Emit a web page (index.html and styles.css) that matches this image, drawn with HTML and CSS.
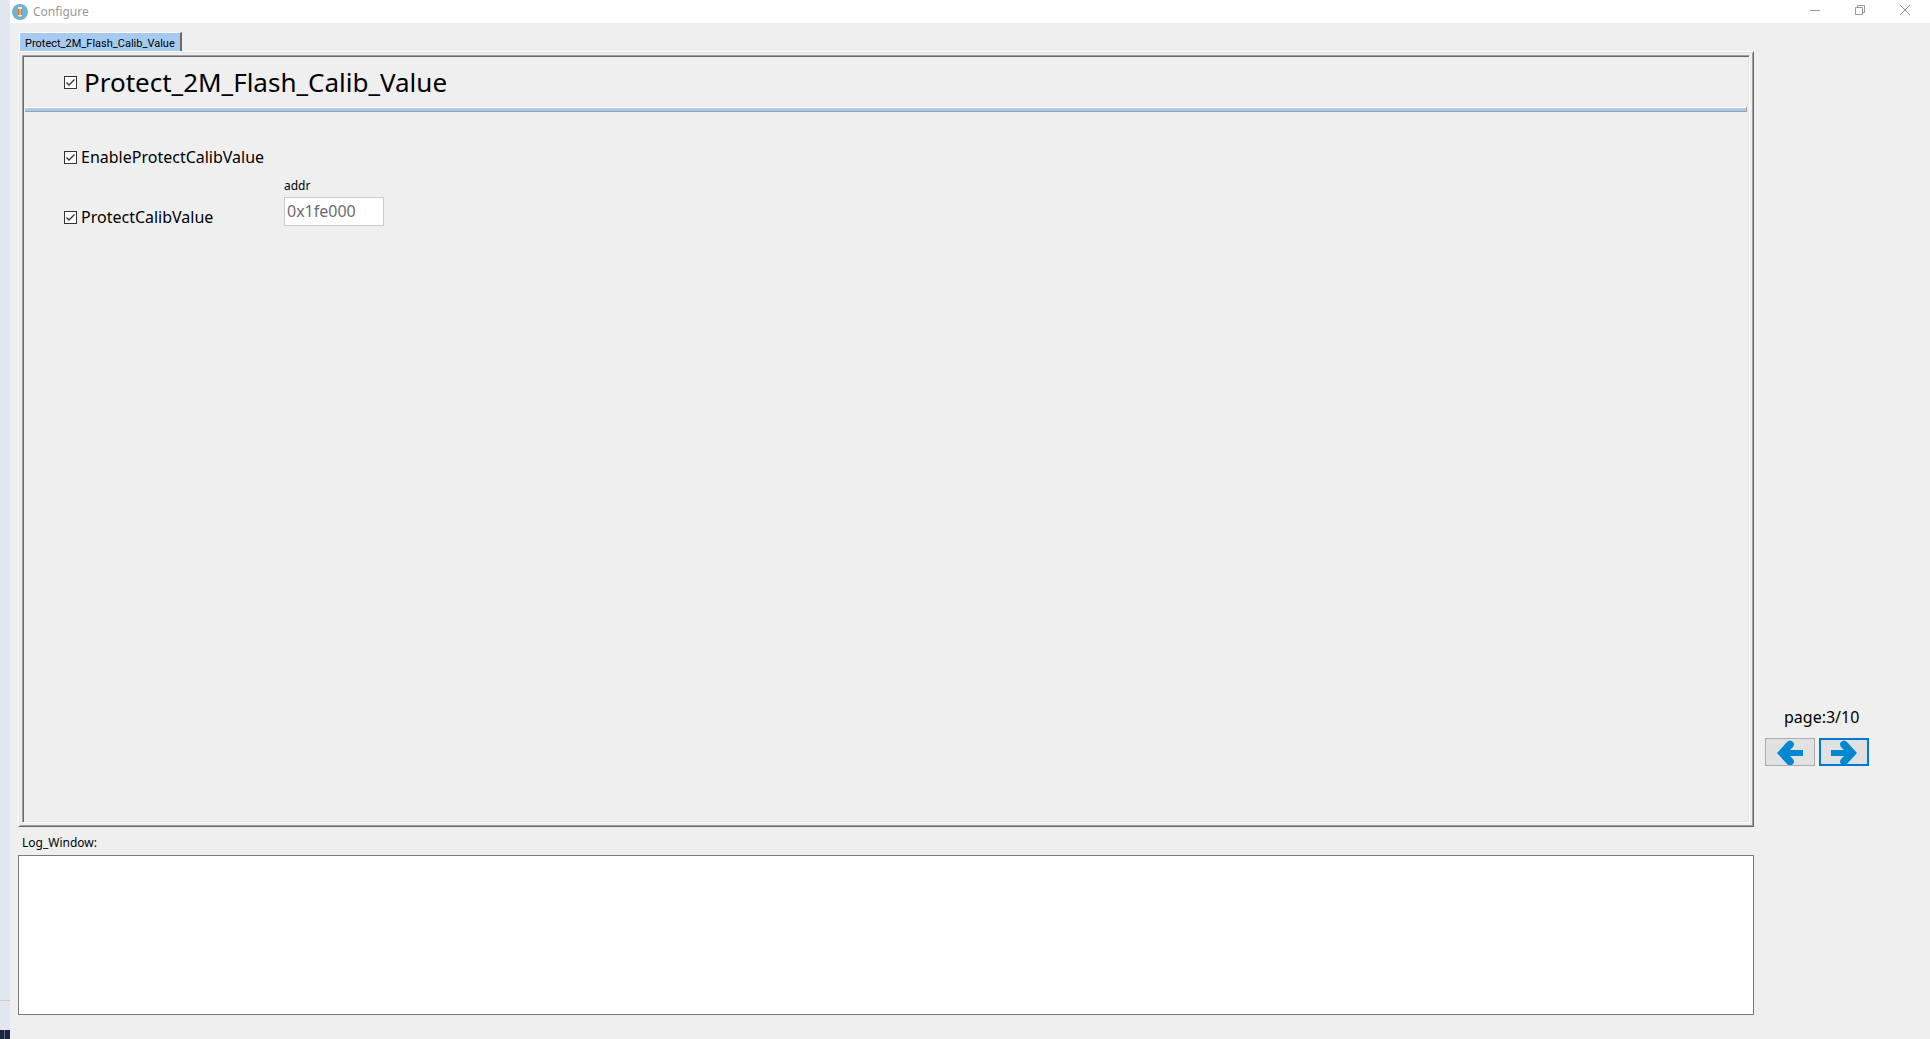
FILE: index.html
```html
<!DOCTYPE html>
<html lang="en">
<head>
<meta charset="utf-8">
<title>Configure</title>
<link rel="stylesheet" href="styles.css">
</head>
<body>
<div class="desktop"><div class="desktop-edge"></div><div class="taskbar"></div></div>
<div class="window">
  <header class="titlebar">
    <svg class="app-icon" viewBox="0 0 16 16" aria-hidden="true">
      <circle cx="8" cy="8" r="8" fill="#71b1d3"/>
      <path d="M6 3h4v8.500l-2 2.500-2-2.500z" fill="#f8e6d2"/>
      <path d="M6 5h4v6H6z" fill="#e2703c"/>
      <path d="M7.300 5H9v6H7.300z" fill="#f6ae6a"/>
      <path d="M7.300 12.800h1.400L8 14z" fill="#5a4a42"/>
    </svg>
    <h1 class="window-title">Configure</h1>
    <div class="window-controls">
      <button class="window-button" type="button" aria-label="Minimize"><svg class="window-glyph" viewBox="0 0 10 10"><path d="M0 5.500h10"/></svg></button>
      <button class="window-button" type="button" aria-label="Restore"><svg class="window-glyph" viewBox="0 0 10 10"><path d="M.5 2.500h7v7h-7zM2.500 2.500v-2h7v7h-2"/></svg></button>
      <button class="window-button" type="button" aria-label="Close"><svg class="window-glyph" viewBox="0 0 10 10"><path d="M0 0l10 10M10 0L0 10"/></svg></button>
    </div>
  </header>
  <div class="content">
    <main class="main">
      <div class="tabs"><button class="tab" type="button">Protect_2M_Flash_Calib_Value</button></div>
      <div class="notebook">
        <section class="page">
          <div class="page-header">
            <label class="heading"><input class="check" type="checkbox" checked><span>Protect_2M_Flash_Calib_Value</span></label>
          </div>
          <div class="options">
            <label class="option"><input class="check" type="checkbox" checked><span>EnableProtectCalibValue</span></label>
            <div class="option-row">
              <label class="option"><input class="check" type="checkbox" checked><span>ProtectCalibValue</span></label>
              <div class="field">
                <label class="field-label" for="addr">addr</label>
                <input class="field-input" id="addr" type="text" value="0x1fe000" disabled>
              </div>
            </div>
          </div>
        </section>
      </div>
      <label class="log-label" for="log">Log_Window:</label>
      <textarea class="log" id="log"></textarea>
    </main>
    <aside class="pager">
      <p class="page-count">page:3/10</p>
      <div class="pager-buttons">
        <button class="pager-button" type="button" aria-label="Previous page"><svg class="arrow" viewBox="0 0 26 26"><path d="M0 13L10 2Q13-1 16 2Q18 4 16 7L13 10H26V16H13L16 19Q18 22 16 24Q13 27 10 24Z"/></svg></button>
        <button class="pager-button focused" type="button" aria-label="Next page"><svg class="arrow" viewBox="0 0 26 26"><path d="M26 13L16 2Q13-1 10 2Q8 4 10 7L13 10H0V16H13L10 19Q8 22 10 24Q13 27 16 24Z"/></svg></button>
      </div>
    </aside>
  </div>
</div>
</body>
</html>
```
FILE: styles.css
```css
* { box-sizing: border-box; }

body {
  display: flex;
  height: 100vh;
  margin: 0;
  background: #efefef;
  color: #000;
  font: 12px/16px "Noto Sans", sans-serif;
}

button, input, textarea { font: inherit; }

.desktop {
  display: flex;
  flex-direction: column;
  justify-content: flex-end;
  width: 10px;
  background: #e1e6ef;
}
.desktop-edge { height: 30px; border-top: 1px solid #c8cbd0; }
.taskbar { height: 9px; background: linear-gradient(90deg, #1a2740 4px, #5f6b80 4px, #5f6b80 5px, #1a2740 5px); }

.window { display: flex; flex: 1; flex-direction: column; min-width: 0; }

.titlebar { display: flex; align-items: center; height: 23px; padding: 0 3px 0 2px; background: #fff; }
.app-icon { width: 16px; height: 16px; }
.window-title { margin: 0 0 0 5px; color: #999; font-size: 12px; font-weight: 400; }
.window-controls { display: flex; align-self: flex-start; margin-left: auto; }
.window-button { display: flex; align-items: center; justify-content: center; width: 45px; height: 20px; padding: 0; border: 0; background: none; }
.window-glyph { width: 10px; height: 10px; fill: none; stroke: #999; }

.content { display: flex; flex: 1; min-height: 0; padding: 9px 0 24px 8px; }
.main { display: flex; flex: 1; flex-direction: column; min-width: 0; }

.tabs { display: flex; height: 19px; }
.tab {
  margin-left: 1px;
  padding: 3px 5px 0;
  border: solid;
  border-width: 1px 2px 0 1px;
  border-color: #fff #696969 #fff #fff;
  background: #a6caf0;
  font-family: Roboto, "Noto Sans", sans-serif;
  font-size: 11px;
  line-height: 15px;
  white-space: nowrap;
}

.notebook {
  display: flex;
  flex: 1;
  padding: 3px;
  border: 1px solid;
  border-color: #fff #696969 #696969 #fff;
  box-shadow: inset 1px 1px #e3e3e3, inset -1px -1px #a0a0a0;
}
.page {
  flex: 1;
  padding: 1px;
  border: 1px solid;
  border-color: #a0a0a0 #fff #fff #a0a0a0;
  box-shadow: inset 1px 1px #696969, inset -1px -1px #e3e3e3;
}
.page-header {
  height: 55px;
  margin: 0 1px;
  padding: 7px 39px 0;
  border-bottom: 1px solid #a0a0a0;
  background:
    linear-gradient(#a0a0a0, #a0a0a0) right bottom / 1px 4px no-repeat,
    linear-gradient(#fff 1px, #a6caf0 1px) bottom / 100% 4px no-repeat;
}
.heading { display: flex; align-items: center; gap: 7px; height: 36px; font-size: 26px; line-height: 36px; }
.check {
  flex: none;
  width: 13px;
  height: 13px;
  margin: 0;
  border: 1px solid #333;
  appearance: none;
  background: #fff;
}
.check:checked { background: #fff url("data:image/svg+xml,%3Csvg xmlns='http://www.w3.org/2000/svg' viewBox='0 0 11 11'%3E%3Cpath d='M1.500 5.500l2.500 2.500 5.500-5.500' fill='none' stroke='%23333' stroke-width='1.300'/%3E%3C/svg%3E") center / 11px 11px no-repeat; }

.options { padding: 33px 40px 0; }
.option { display: flex; align-items: center; gap: 4px; width: 220px; height: 24px; font-size: 16px; line-height: 24px; }
.option-row { display: flex; align-items: flex-end; margin-top: 36px; height: 24px; }
.field { display: flex; flex-direction: column; gap: 3px; padding-bottom: 3px; }
.field-input { width: 100px; height: 29px; padding: 0 2px 2px; border: 1px solid #ccc; border-radius: 0; background: #fff; color: #6d6d6d; font-size: 16px; }

.log-label { margin: 8px 0 4px 4px; }
.log { display: block; width: 100%; height: 160px; border: 1px solid #7a7a7a; border-radius: 0; background: #fff; resize: none; }

.pager { width: 176px; padding: 672px 0 0 11px; }
.page-count { margin: 0 0 8px 19px; font-size: 16px; line-height: 26px; }
.pager-buttons { display: flex; gap: 4px; }
.pager-button { display: flex; align-items: center; justify-content: center; width: 50px; height: 28px; padding: 1px 0 0; border: 1px solid #adadad; background: #e1e1e1; overflow: hidden; }
.pager-button.focused { border: 2px solid #0078d7; }
.arrow { flex: none; width: 26px; height: 26px; fill: #0288d1; }
```
